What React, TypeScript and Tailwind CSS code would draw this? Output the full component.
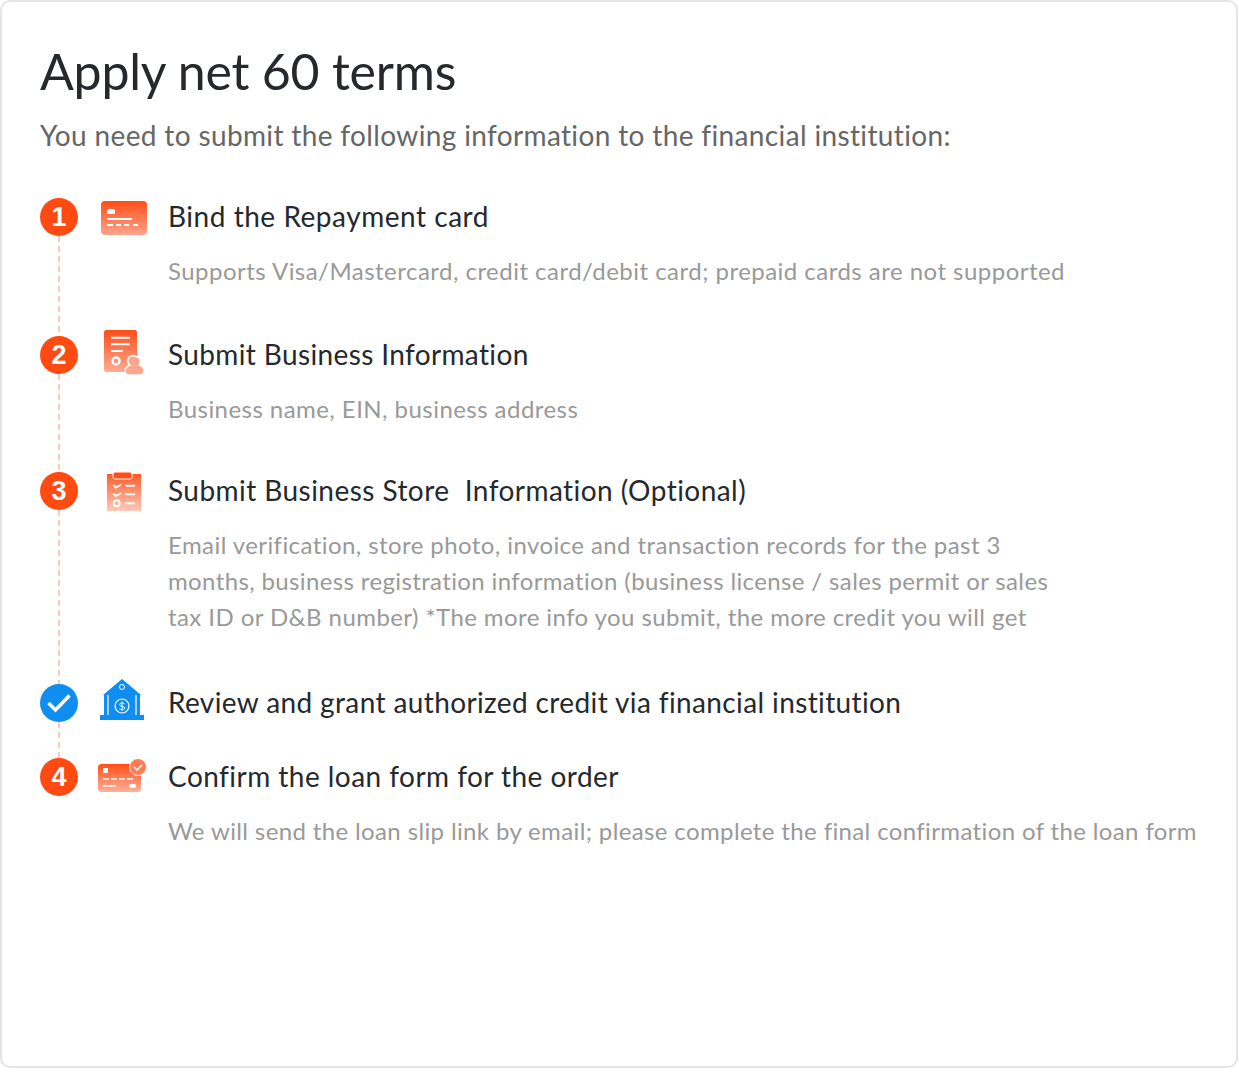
const font = "font-['Lato','Open_Sans',sans-serif]";

// every icon shares a 50x38 box and may spill out of it, as in the picture
function Icon({ children }: { children: React.ReactNode }) {
  return (
    <svg width="50" height="38" viewBox="0 0 50 38" fill="none" className="overflow-visible">
      {children}
    </svg>
  );
}

function CardIcon() {
  return (
    <Icon>
      <defs>
        <linearGradient id="g1" x1="0" y1="0" x2="0" y2="1">
          <stop offset="0" stopColor="#ff4d17" />
          <stop offset="1" stopColor="#ffa58c" />
        </linearGradient>
      </defs>
      <rect x="3" y="3" width="46" height="34" rx="4" fill="url(#g1)" />
      <rect x="9" y="11" width="8" height="5" rx="1.5" fill="#fff" />
      <rect x="9" y="20" width="25" height="2" fill="#fff" />
      <path d="M9 27h6M18 27h5M26 27h5M35 27h5" stroke="#fff" strokeWidth="2" />
    </Icon>
  );
}

function DocIcon() {
  return (
    <Icon>
      <defs>
        <linearGradient id="g2" x1="0" y1="0" x2="0" y2="1">
          <stop offset="0" stopColor="#ff4d17" />
          <stop offset="1" stopColor="#ffab94" />
        </linearGradient>
      </defs>
      <rect x="6" y="-6" width="33" height="42" rx="2.5" fill="url(#g2)" />
      <path d="M13 1.700h19M13 8.300h19M13 15h12" stroke="#fff" strokeWidth="2" />
      <circle cx="18" cy="25" r="3.500" stroke="#fff" strokeWidth="2.500" />
      <path d="M37.700 20.500a5 5 0 0 1 3.500 8.500c2.500.8 4.800 2.400 4.800 5.500 0 3-1.500 4.500-4 4.500H31c-2.500 0-4-1.500-4-4 0-3 2.300-5 5-6a5 5 0 0 1 5.700-8.500z" fill="#ffa68d" stroke="#fff" strokeWidth="1.500" />
    </Icon>
  );
}

function ListIcon() {
  return (
    <Icon>
      <defs>
        <linearGradient id="g3" x1="0" y1="0" x2="0" y2="1">
          <stop offset="0" stopColor="#ff5a28" />
          <stop offset="1" stopColor="#ffc9b9" />
        </linearGradient>
      </defs>
      <path d="M9 2h34v37H9z" fill="url(#g3)" />
      <rect x="15" y="0" width="19" height="7" rx="2" fill="#ff4d17" stroke="#fff" strokeWidth="1" />
      <path d="M15 13l3 2.500 5-3M15 21.500l3 2.500 5-3" stroke="#fff" strokeWidth="2" />
      <path d="M27 13.700h10M27 22.300h10M27 31.300h10" stroke="#fff" strokeWidth="2" />
      <circle cx="18.700" cy="31.300" r="3" stroke="#fff" strokeWidth="2" />
    </Icon>
  );
}

function BankIcon() {
  return (
    <Icon>
      <path d="M24 -5L43 11H5z" fill="#0f8df0" />
      <circle cx="24" cy="3" r="2.500" stroke="#fff" strokeWidth="1" />
      <rect x="6" y="11" width="36" height="20" fill="#0f8df0" />
      <path d="M10 11v20M38 11v20" stroke="#fff" strokeWidth="1.200" />
      <circle cx="24" cy="22" r="7" stroke="#fff" strokeWidth="1.200" />
      <path d="M26.500 19.800c-.6-1-4.800-1.400-4.800.9 0 2.400 5 1.100 5 3.400 0 2.200-4.400 2-5.200.8M24 17.500v9" stroke="#fff" strokeWidth="1" />
      <rect x="2" y="31" width="44" height="5" fill="#0f8df0" />
    </Icon>
  );
}

function ConfirmIcon() {
  return (
    <Icon>
      <defs>
        <linearGradient id="g4" x1="0" y1="0" x2="0" y2="1">
          <stop offset="0" stopColor="#ff4d17" />
          <stop offset="1" stopColor="#ffb19c" />
        </linearGradient>
      </defs>
      <rect x="0" y="6" width="43" height="28" rx="3.500" fill="url(#g4)" />
      <rect x="5" y="10" width="5" height="5" fill="#fff" />
      <path d="M5 21h6M13 21h6M21 21h6M29 21h6M5 28h13" stroke="#fff" strokeWidth="1.500" />
      <rect x="31" y="26" width="7" height="4" rx="2" fill="#fff" />
      <circle cx="40" cy="9" r="8.500" fill="#ff7c58" stroke="#fff" strokeWidth="1" />
      <path d="M36 9l3 3 5-5" stroke="#fff" strokeWidth="1.500" />
    </Icon>
  );
}

function Marker({ n, done, line }: { n?: number; done?: boolean; line?: boolean }) {
  return (
    <div className="flex w-[38px] shrink-0 flex-col items-center">
      <div className={`flex h-[38px] w-[38px] shrink-0 items-center justify-center rounded-full text-[27px] font-bold text-white font-['Liberation_Sans',sans-serif] ${done ? "bg-[#0f8df0]" : "bg-[#ff4a12]"}`}>
        {done ? (
          <svg width="24" height="20" viewBox="0 0 24 20" fill="none"><path d="M1.500 10l7 7L22.500 2.500" stroke="#fff" strokeWidth="3.500" /></svg>
        ) : n}
      </div>
      {line && <div className="w-[2px] flex-1 bg-[repeating-linear-gradient(to_bottom,#ffc9b8_0,#ffc9b8_6px,transparent_6px,transparent_10px)]" />}
    </div>
  );
}

function Step({ n, done, line, icon, title, track, pb, children }: { n?: number; done?: boolean; line?: boolean; icon: React.ReactNode; title: string; track: string; pb: string; children?: React.ReactNode }) {
  return (
    <div className="flex">
      <Marker n={n} done={done} line={line} />
      <div className="ml-[20px] h-[38px] w-[50px] shrink-0">{icon}</div>
      <div className={`ml-[20px] ${pb}`}>
        <div className={`h-[38px] text-[28px] leading-[36px] whitespace-pre text-[#25292e] ${track}`}>{title}</div>
        {children && <div className="mt-[17px] pb-[1px] text-[24px] leading-[36px] whitespace-nowrap text-[#999999]">{children}</div>}
      </div>
    </div>
  );
}

export default function App() {
  return (
    <div className={`h-[1068px] w-[1238px] rounded-[10px] border-2 border-[#e5e5e5] bg-white pt-[38px] pl-[38px] ${font}`}>
      <h1 className="text-[50px] leading-[62px] tracking-[-0.2px] text-[#25292e]">Apply net 60 terms</h1>
      <p className="mt-[15px] text-[28px] leading-[36px] tracking-[0.36px] text-[#666666]">You need to submit the following information to the financial institution:</p>
      <div className="mt-[45px]">
        <Step n={1} line icon={<CardIcon />} title="Bind the Repayment card" track="tracking-[0.53px]" pb="pb-[46px]">
          <div className="tracking-[0.47px]">Supports Visa/Mastercard, credit card/debit card; prepaid cards are not supported</div>
        </Step>
        <Step n={2} line icon={<DocIcon />} title="Submit Business Information" track="tracking-[0.37px]" pb="pb-[44px]">
          <div className="tracking-[0.45px]">Business name, EIN, business address</div>
        </Step>
        <Step n={3} line icon={<ListIcon />} title="Submit Business Store  Information (Optional)" track="tracking-[0.45px]" pb="pb-[48px]">
          <div className="tracking-[0.42px]">Email verification, store photo, invoice and transaction records for the past 3</div>
          <div className="tracking-[0.37px]">months, business registration information (business license / sales permit or sales</div>
          <div className="tracking-[0.42px]">tax ID or D&amp;B number) *The more info you submit, the more credit you will get</div>
        </Step>
        <Step done line icon={<BankIcon />} title="Review and grant authorized credit via financial institution" track="tracking-[0.38px]" pb="pb-[36px]" />
        <Step n={4} icon={<ConfirmIcon />} title="Confirm the loan form for the order" track="tracking-[0.46px]" pb="pb-0">
          <div className="tracking-[0.37px]">We will send the loan slip link by email; please complete the final confirmation of the loan form</div>
        </Step>
      </div>
    </div>
  );
}
